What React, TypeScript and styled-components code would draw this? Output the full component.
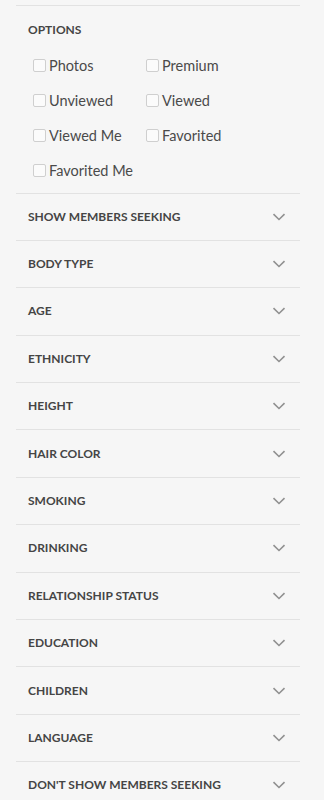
import React from "react";
import styled, { createGlobalStyle } from "styled-components";

const Global = createGlobalStyle`
  html, body { margin: 0; padding: 0; background: #f6f6f6; }
  body { font-family: Lato, "Open Sans", sans-serif; }
`;

const Panel = styled.div`
  width: 284px;
  margin: 5px 0 0 16px;
  border-top: 1px solid #e2e2e2;
`;

const Section = styled.div`
  border-bottom: 1px solid #e2e2e2;
`;

const OptionsBody = styled.div`
  padding: 16px 0 5px 12px;
`;

const Title = styled.div`
  font-size: 12px;
  font-weight: 700;
  color: #454545;
  line-height: 16px;
`;

const Grid = styled.div`
  display: grid;
  grid-template-columns: 113px 1fr;
  grid-auto-rows: 35px;
  margin-top: 9.5px;
  margin-left: 5px;
`;

const Label = styled.label`
  display: flex;
  align-items: center;
  gap: 3px;
  font-size: 14.5px;
  color: #4a4a4a;
`;

const Box = styled.span`
  width: 11px;
  height: 11px;
  border: 1px solid #cfcfcf;
  border-radius: 2px;
  background: #fbfbfb;
`;

const Header = styled.div`
  display: flex;
  align-items: center;
  justify-content: space-between;
  height: 46.4px;
  padding: 0 14px 0 12px;
`;

const Chevron = () => (
  <svg width="14" height="8" viewBox="0 0 14 8">
    <path d="M1.5 1.2 L7 6.5 L12.5 1.2" fill="none" stroke="#909090" strokeWidth="1.6" />
  </svg>
);

const options = ["Photos", "Premium", "Unviewed", "Viewed", "Viewed Me", "Favorited", "Favorited Me"];
const sections = [
  "SHOW MEMBERS SEEKING",
  "BODY TYPE",
  "AGE",
  "ETHNICITY",
  "HEIGHT",
  "HAIR COLOR",
  "SMOKING",
  "DRINKING",
  "RELATIONSHIP STATUS",
  "EDUCATION",
  "CHILDREN",
  "LANGUAGE",
  "DON'T SHOW MEMBERS SEEKING",
];

export default function App() {
  return (
    <>
      <Global />
      <Panel>
        <Section>
          <OptionsBody>
            <Title>OPTIONS</Title>
            <Grid>
              {options.map((o) => (
                <Label key={o}>
                  <Box />
                  {o}
                </Label>
              ))}
            </Grid>
          </OptionsBody>
        </Section>
        {sections.map((s) => (
          <Section key={s}>
            <Header>
              <Title>{s}</Title>
              <Chevron />
            </Header>
          </Section>
        ))}
      </Panel>
    </>
  );
}
